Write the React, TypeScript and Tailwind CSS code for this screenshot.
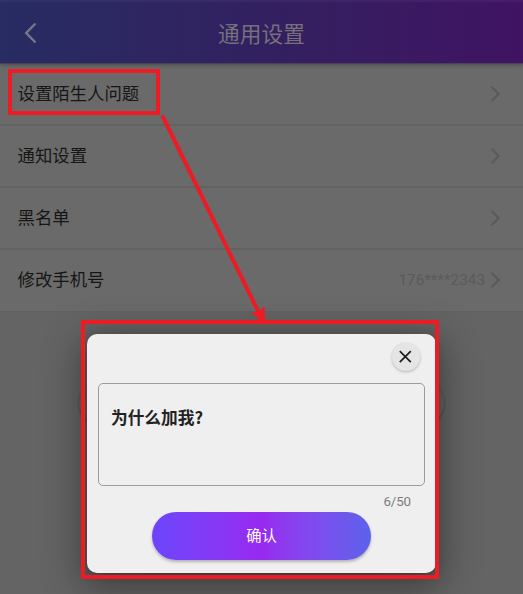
import React from "react";

function Chevron() {
  return (
    <svg width="12" height="18" viewBox="0 0 12 18" fill="none" stroke="#5b5b5b" strokeWidth="2.3">
      <path d="M1.6 1.7 L8.6 9 L1.6 16.3" />
    </svg>
  );
}

function SettingRow({ label, value }: { label: string; value?: string }) {
  return (
    <div className="flex h-[62px] items-center border-b-2 border-[#626262] bg-[#6a6a6a] pr-[21px] pl-[17.5px] last:border-b last:pb-px">
      <span className="-mt-0.5 grow text-[17.4px] leading-6 text-[#161616]">{label}</span>
      {value && (
        <span className="mr-[5px] [font-family:Roboto,sans-serif] text-[15.3px] leading-6 text-[#5b5b5b]">{value}</span>
      )}
      <Chevron />
    </div>
  );
}

function QuestionDialog() {
  return (
    <div className="absolute top-[334px] left-[87px] flex h-[239px] w-[349px] flex-col rounded-[10px] bg-[#efefef] px-[11px] shadow-[0_10px_38px_6px_rgba(0,0,0,0.38),0_2px_10px_rgba(0,0,0,0.16)]">
      <div className="flex h-[49px] shrink-0 items-start justify-end pt-[9px] pr-[5px]">
        <button className="flex size-7 items-center justify-center rounded-full bg-[#e5e5e5] shadow-[0_1px_3px_rgba(0,0,0,0.25)]">
          <svg width="14" height="14" viewBox="0 0 14 14" fill="none" stroke="#1c1c1c" strokeWidth="1.7">
            <path d="M0.8 1.2 L11.8 12.2 M11.8 1.2 L0.8 12.2" />
          </svg>
        </button>
      </div>
      <div className="h-[103px] shrink-0 rounded-[5px] border border-[#9c9c9c] px-3 pt-[21px] text-[16.7px] leading-6 font-bold text-[#222]">
        为什么加我?
      </div>
      <div className="mt-[7px] pr-[14px] text-right [font-family:Roboto,sans-serif] text-[13.3px] leading-[18px] tracking-[-0.1px] text-[#7c7c7c]">6/50</div>
      <button className="mt-px ml-[54px] h-12 w-[219px] shrink-0 rounded-full bg-linear-to-r from-[#6b45fb] via-[#9829f0] to-[#5b62eb] pb-[3px] text-[15.3px] text-white shadow-[0_2px_3px_rgba(0,0,0,0.25)]">
        确认
      </button>
    </div>
  );
}

export default function App() {
  return (
    <div className="relative h-[594px] w-[523px] overflow-hidden bg-[#646464] font-['Noto_Sans_CJK_SC',sans-serif]">
      <header className="relative z-10 grid h-16 grid-cols-[1fr_auto_1fr] items-center border-b border-[#494353] bg-linear-to-r from-[#272c62] via-[#322060] to-[#401363] px-[23px] pt-0.5 shadow-[0_1px_4px_rgba(0,0,0,0.3),inset_0_2px_0_rgba(255,255,255,0.04)]">
        <svg className="mt-px" width="16" height="22" viewBox="0 0 16 22" fill="none" stroke="#797785" strokeWidth="2.4">
          <path d="M12.5 1.5 L3.2 11 L12.5 20.5" />
        </svg>
        <h1 className="text-[21.7px] leading-8 text-[#75707c]">通用设置</h1>
      </header>
      <main className="flex flex-col">
        <section>
          <SettingRow label="设置陌生人问题" />
          <SettingRow label="通知设置" />
          <SettingRow label="黑名单" />
          <SettingRow label="修改手机号" value="176****2343" />
        </section>
        <section className="mt-[69px] ml-[79px] h-11 w-[365px] rounded-full bg-[#646464] shadow-[0_1px_3px_rgba(0,0,0,0.28)]" />
      </main>
      <QuestionDialog />
      <div className="absolute top-[69px] left-2 z-20 h-[46px] w-[152px] rounded-[1px] border-4 border-[#ed1c24]" />
      <div className="absolute top-[320px] left-[81px] z-20 h-[259px] w-[358px] rounded-[1px] border-4 border-[#ed1c24]" />
      <svg className="absolute inset-0 z-20" width="523" height="594" viewBox="0 0 523 594">
        <path d="M163 117 L260 315" stroke="#ed1c24" strokeWidth="4" strokeLinecap="round" />
        <path d="M265.5 325.5 L251 312 L258.5 312.5 L264.5 306 Z" fill="#ed1c24" />
      </svg>
    </div>
  );
}
